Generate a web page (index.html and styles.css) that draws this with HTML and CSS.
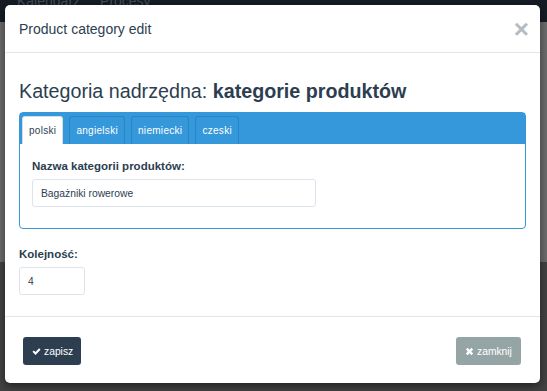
FILE: index.html
```html
<!DOCTYPE html>
<html>
<head>
<meta charset="utf-8">
<link rel="stylesheet" href="styles.css">
</head>
<body>
<div class="backdrop">
  <div class="navbar"><span class="nav-item">Kalendarz</span><span class="nav-item">Procesy</span></div>
  <div class="page-mid"></div>
  <div class="page-low"></div>
</div>
<div class="modal">
  <div class="modal-header">
    <h4 class="modal-title">Product category edit</h4>
    <span class="close">&times;</span>
  </div>
  <div class="modal-body">
    <h3 class="parent-title">Kategoria nadrzędna: <b>kategorie produktów</b></h3>
    <div class="tab-panel">
      <div class="tabs">
        <span class="tab active">polski</span>
        <span class="tab">angielski</span>
        <span class="tab">niemiecki</span>
        <span class="tab">czeski</span>
      </div>
      <div class="tab-content">
        <label class="field-label">Nazwa kategorii produktów:</label>
        <div class="input wide">Bagażniki rowerowe</div>
      </div>
    </div>
    <label class="field-label order-label">Kolejność:</label>
    <div class="input narrow">4</div>
  </div>
  <div class="modal-footer">
    <span class="btn btn-primary"><svg class="ico" viewBox="0 0 16 16" width="9" height="9"><path d="M0.8 8.6 L3.4 6.0 L6.3 8.9 L12.6 2.4 L15.2 5.0 L6.3 14.0 Z" fill="#fff"/></svg>zapisz</span>
    <span class="btn btn-default"><svg class="ico" viewBox="0 0 16 16" width="9" height="9"><path d="M1.5 4.6 L4.6 1.5 L8 4.9 L11.4 1.5 L14.5 4.6 L11.1 8 L14.5 11.4 L11.4 14.5 L8 11.1 L4.6 14.5 L1.5 11.4 L4.9 8 Z" fill="#fff"/></svg>zamknij</span>
  </div>
</div>
</body>
</html>
```
FILE: styles.css
```css
html, body {
  margin: 0;
  padding: 0;
  width: 547px;
  height: 391px;
  overflow: hidden;
  font-family: "Liberation Sans", Arial, sans-serif;
}
.backdrop {
  display: flex;
  flex-direction: column;
  height: 391px;
}
.navbar {
  height: 22px;
  background: #151c24;
  display: flex;
  gap: 20px;
  padding-left: 17px;
  align-items: flex-start;
  font-size: 14px;
  line-height: 14px;
  color: #444d57;
  overflow: hidden;
}
.nav-item {
  margin-top: -6px;
}
.page-mid {
  height: 240px;
  background: #6c6c6c;
}
.page-low {
  flex: 1;
  background: #424242;
}
.modal {
  position: absolute;
  left: 5px;
  top: 5px;
  width: 535px;
  height: 378px;
  background: #fff;
  border-radius: 5px;
  box-shadow: 0 3px 9px rgba(0,0,0,0.5);
  display: flex;
  flex-direction: column;
}
.modal-header {
  height: 47px;
  border-bottom: 1px solid #e5e5e5;
  display: flex;
  align-items: center;
  justify-content: space-between;
  padding: 0 11px 0 14px;
}
.modal-title {
  margin: 0;
  font-weight: normal;
  font-size: 14px;
  color: #2c3e50;
}
.close {
  font-size: 26px;
  color: #b4bcc2;
  font-weight: bold;
  line-height: 1;
}
.modal-body {
  padding: 26px 14px 0 14px;
  height: 237px;
  border-bottom: 1px solid #e5e5e5;
}
.parent-title {
  margin: 0 0 9px 0;
  font-size: 19.7px;
  font-weight: normal;
  color: #2c3e50;
  line-height: 24px;
}
.parent-title b {
  font-weight: bold;
}
.tab-panel {
  border: 1px solid #3498db;
  border-radius: 4px;
  background: #fff;
}
.tabs {
  background: #3498db;
  height: 31px;
  display: flex;
  align-items: flex-end;
  padding-left: 2px;
  gap: 6px;
}
.tab {
  height: 28px;
  box-sizing: border-box;
  padding: 0 6px;
  display: flex;
  align-items: center;
  font-size: 10px;
  letter-spacing: 0.3px;
  color: #fff;
  border: 1px solid #2a85c4;
  border-bottom: none;
  border-radius: 3px 3px 0 0;
}
.tab.active {
  background: #fff;
  color: #2c3e50;
  border-color: #d6dde3;
}
.tab-content {
  padding: 15px 12px 21px 12px;
}
.field-label {
  display: block;
  font-size: 11.5px;
  font-weight: bold;
  color: #2c3e50;
  margin-bottom: 6px;
  line-height: 14px;
}
.input {
  box-sizing: border-box;
  border: 1px solid #dce4ec;
  border-radius: 3px;
  height: 28px;
  display: flex;
  align-items: center;
  padding-left: 8px;
  font-size: 10.3px;
  color: #2c3e50;
}
.input.wide { width: 284px; }
.input.narrow { width: 66px; padding-left: 8px; }
.order-label {
  margin-top: 18px;
}
.modal-footer {
  flex: 1;
  display: flex;
  justify-content: space-between;
  align-items: flex-start;
  padding: 20px 19px 0 18px;
}
.btn {
  height: 28px;
  box-sizing: border-box;
  display: flex;
  align-items: center;
  gap: 3px;
  padding: 0 9px;
  font-size: 10.3px;
  color: #fff;
  border-radius: 3px;
}
.btn-primary { background: #2c3e50; width: 58px; }
.btn-default { background: #95a5a6; width: 65px; }
.ico { flex: none; }
```
